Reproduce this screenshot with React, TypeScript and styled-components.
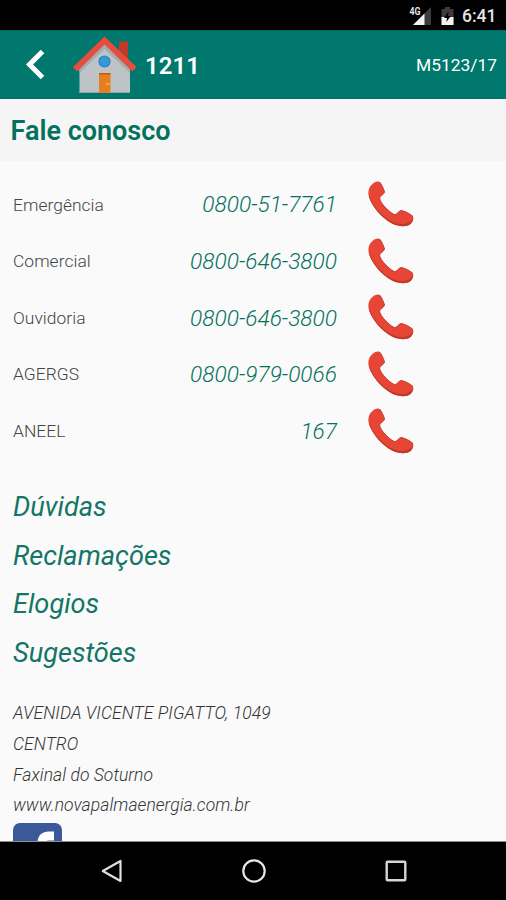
import React from "react";
import styled, { createGlobalStyle } from "styled-components";

const TEAL = "#00786e";

const GlobalStyle = createGlobalStyle`
  * { box-sizing: border-box; }
  body { margin: 0; background: #000; font-family: Roboto, "Liberation Sans", sans-serif; }
`;

const Screen = styled.div`
  width: 506px;
  height: 900px;
  display: flex;
  flex-direction: column;
  overflow: hidden;
  background: #fafafa;
`;

const StatusBar = styled.div`
  flex: none;
  height: 30px;
  display: flex;
  align-items: center;
  justify-content: flex-end;
  padding: 2px 10px 0 0;
  background: #000;
`;

const Clock = styled.span`
  width: 34px;
  margin-left: 8px;
  color: #e4e4e4;
  font-size: 17.5px;
  font-weight: 500;
  line-height: 28px;
  white-space: nowrap;
`;

const Toolbar = styled.header`
  flex: none;
  height: 69px;
  display: flex;
  align-items: center;
  padding: 0 9px 0 24px;
  background: ${TEAL};
  border-top: 1px solid #00685e;
  border-bottom: 1px solid #0a6f64;
  color: #fff;
`;

const Unit = styled.h1`
  flex: 1;
  margin: 3px 0 0 8px;
  font-size: 24px;
  font-weight: 600;
  line-height: 30px;
`;

const Meter = styled.span`
  margin-top: 0;
  font-size: 17.4px;
`;

const Heading = styled.h2`
  flex: none;
  height: 62px;
  margin: 0;
  padding-left: 10.5px;
  background: #f5f5f5;
  color: #04715f;
  font-size: 27px;
  font-weight: 600;
  line-height: 64px;
`;

const Content = styled.main`
  flex: 1;
  min-height: 0;
  overflow: hidden;
  padding: 15px 13px 0;
`;

const ContactRow = styled.div`
  height: 56.6px;
  display: grid;
  grid-template-columns: 130px 194px 1fr;
  align-items: center;
`;

const ContactName = styled.span`
  padding-top: 0.8px;
  color: #444;
  font-size: 17.4px;
  font-weight: 360;
  letter-spacing: 0.05px;
  line-height: 24px;
`;

const ContactNumber = styled.a`
  padding-top: 2.4px;
  color: #04715f;
  font-size: 22.7px;
  font-style: italic;
  font-weight: 350;
  line-height: 28px;
  text-align: right;
`;

const CallIcon = styled.svg`
  display: block;
  margin-left: 30px;
`;

const Topics = styled.nav`
  display: flex;
  flex-direction: column;
  margin-top: 24px;
`;

const Topic = styled.a`
  height: 48.6px;
  color: #127566;
  font-size: 27.15px;
  font-style: italic;
  font-weight: 400;
  line-height: 48.6px;
`;

const Address = styled.address`
  margin-top: 21px;
  color: #333;
  font-size: 17.5px;
  font-weight: 350;
  letter-spacing: 0.06px;
  line-height: 30.6px;
`;

const AddressLine = styled.div`
  white-space: nowrap;
`;

const SocialIcon = styled.svg`
  display: block;
  margin-top: 2.5px;
`;

const NavBar = styled.footer`
  flex: none;
  height: 58px;
  display: flex;
  align-items: center;
  justify-content: space-between;
  padding: 0 98px 0 100px;
  background: #000;
  box-shadow: 0 -1px 0 #8f8f8f;
  position: relative;
`;

const contacts = [
  { name: "Emergência", number: "0800-51-7761" },
  { name: "Comercial", number: "0800-646-3800" },
  { name: "Ouvidoria", number: "0800-646-3800" },
  { name: "AGERGS", number: "0800-979-0066" },
  { name: "ANEEL", number: "167" },
];

const topics = ["Dúvidas", "Reclamações", "Elogios", "Sugestões"];

const address = [
  "AVENIDA VICENTE PIGATTO, 1049",
  "CENTRO",
  "Faxinal do Soturno",
  "www.novapalmaenergia.com.br",
];

function Signal() {
  return (
    <svg width="24" height="22" viewBox="0 0 24 22">
      <path d="M23 2V20H5Z" fill="#3c3c3c" />
      <path d="M16.5 8.5V20H5Z" fill="#f2f2f2" />
      <text x="1.500" y="9.500" fill="#eee" stroke="#000" strokeWidth="1.6" paintOrder="stroke" fontFamily="Roboto, sans-serif" fontSize="10.500" fontWeight="600" textLength="11" lengthAdjust="spacingAndGlyphs">4G</text>
    </svg>
  );
}

const Battery = styled.svg`
  margin-left: 9px;
`;

function House() {
  return (
    <svg width="64" height="60" viewBox="0 0 64 60">
      <path d="M46 6.500H55V24L46 15Z" fill="#c0392b" />
      <path d="M31.500 9L57 34V58H6.500V34Z" fill="#bdc3c7" />
      <path d="M31.500 9L57 34V38L31.500 14L6.500 38V34Z" fill="#a3adb0" />
      <path d="M31.500 1.500L63.500 32L59.500 36.500L31.500 9.500L4 36.500L0 32Z" fill="#e74c3c" />
      <circle cx="31.500" cy="26.500" r="5.500" fill="#3498db" stroke="#2980b9" strokeWidth="1.200" />
      <path d="M26 38H37.500V58H26Z" fill="#e67e22" />
      <path d="M26 38H37.500V39.500H26Z" fill="#d35400" />
      <rect x="33" y="48" width="3.500" height="2" fill="#f1b80f" />
      <path d="M6.500 57H26V58H6.500ZM37.500 57H57V58H37.500Z" fill="#95a5a6" />
    </svg>
  );
}

function Phone() {
  return (
    <CallIcon width="48" height="48" viewBox="0 0 48 48">
      <path d="M5 4.500C7 2.500 10.500 .800 12.500 2C14.500 4 16.500 8.500 17.500 12C17.500 14 13 16 12.500 18C13.500 23.500 21 31 27 34.500C29.500 35.500 32 30.500 34 30.500C38 31 43.500 34 46 36.500C47.200 39 45 43.500 42 45C38.500 47 31 46.500 25 43.500C15 38 5.500 27.500 2 17C.500 11.500 2 7 5 4.500Z" fill="#e74535" />
      <path d="M2 15C6 28 18 40 30 43.500C37 45 43.500 43 46.300 38.500C46 41 44.500 44 42 45C38.500 47 31 46.500 25 43.500C15 38 5.500 27.500 2 17Z" fill="#c0392b" />
      <path d="M12.500 2C14.500 4 16.500 8.500 17.500 12C17.500 14 13 16 12.500 18C13.500 23.500 21 31 27 34.500C29.500 35.500 32 30.500 34 30.500C38 31 43.500 34 46 36.500" fill="none" stroke="#c8382c" strokeWidth="1" />
    </CallIcon>
  );
}

export default function App() {
  return (
    <>
      <GlobalStyle />
      <Screen>
        <StatusBar>
          <Signal />
          <Battery width="13" height="20" viewBox="0 0 13 20">
            <path d="M4 1H9V3H12.500V19H.500V3H4Z" fill="#3c3c3c" />
            <path d="M.500 11H12.500V19H.500Z" fill="#f2f2f2" />
            <path d="M7.500 5.500L3 12H6L5.300 16L10 10H7Z" fill="#000" />
          </Battery>
          <Clock>6:41</Clock>
        </StatusBar>
        <Toolbar>
          <svg width="49" height="32" viewBox="0 0 49 32">
            <path d="M18.500 2.500L5.500 15.500L18.500 28.500" fill="none" stroke="#fff" strokeWidth="5" />
          </svg>
          <House />
          <Unit>1211</Unit>
          <Meter>M5123/17</Meter>
        </Toolbar>
        <Heading>Fale conosco</Heading>
        <Content>
          {contacts.map((c) => (
            <ContactRow key={c.name}>
              <ContactName>{c.name}</ContactName>
              <ContactNumber>{c.number}</ContactNumber>
              <Phone />
            </ContactRow>
          ))}
          <Topics>
            {topics.map((t) => (
              <Topic key={t}>{t}</Topic>
            ))}
          </Topics>
          <Address>
            {address.map((a) => (
              <AddressLine key={a}>{a}</AddressLine>
            ))}
          </Address>
          <SocialIcon width="49" height="49" viewBox="0 0 49 49">
            <rect width="49" height="49" rx="7" fill="#3b5998" />
            <path d="M41 8.500H36C28.500 8.500 24.500 13 24.500 20V26H19V33H24.500V49H32.500V33H39L40 26H32.500V21C32.500 18.500 34 17.500 36 17.500H41Z" fill="#fff" />
          </SocialIcon>
        </Content>
        <NavBar>
          <svg width="24" height="26" viewBox="0 0 24 26">
            <path d="M20.500 3V23L2.800 13Z" fill="none" stroke="#e0e0e0" strokeWidth="2.200" strokeLinejoin="round" />
          </svg>
          <svg width="26" height="26" viewBox="0 0 26 26">
            <circle cx="13" cy="13" r="10.700" fill="none" stroke="#e6e6e6" strokeWidth="2.200" />
          </svg>
          <svg width="24" height="24" viewBox="0 0 24 24">
            <rect x="2.700" y="2.700" width="18.600" height="18.600" rx="1" fill="none" stroke="#d6d6d6" strokeWidth="2.400" />
          </svg>
        </NavBar>
      </Screen>
    </>
  );
}
